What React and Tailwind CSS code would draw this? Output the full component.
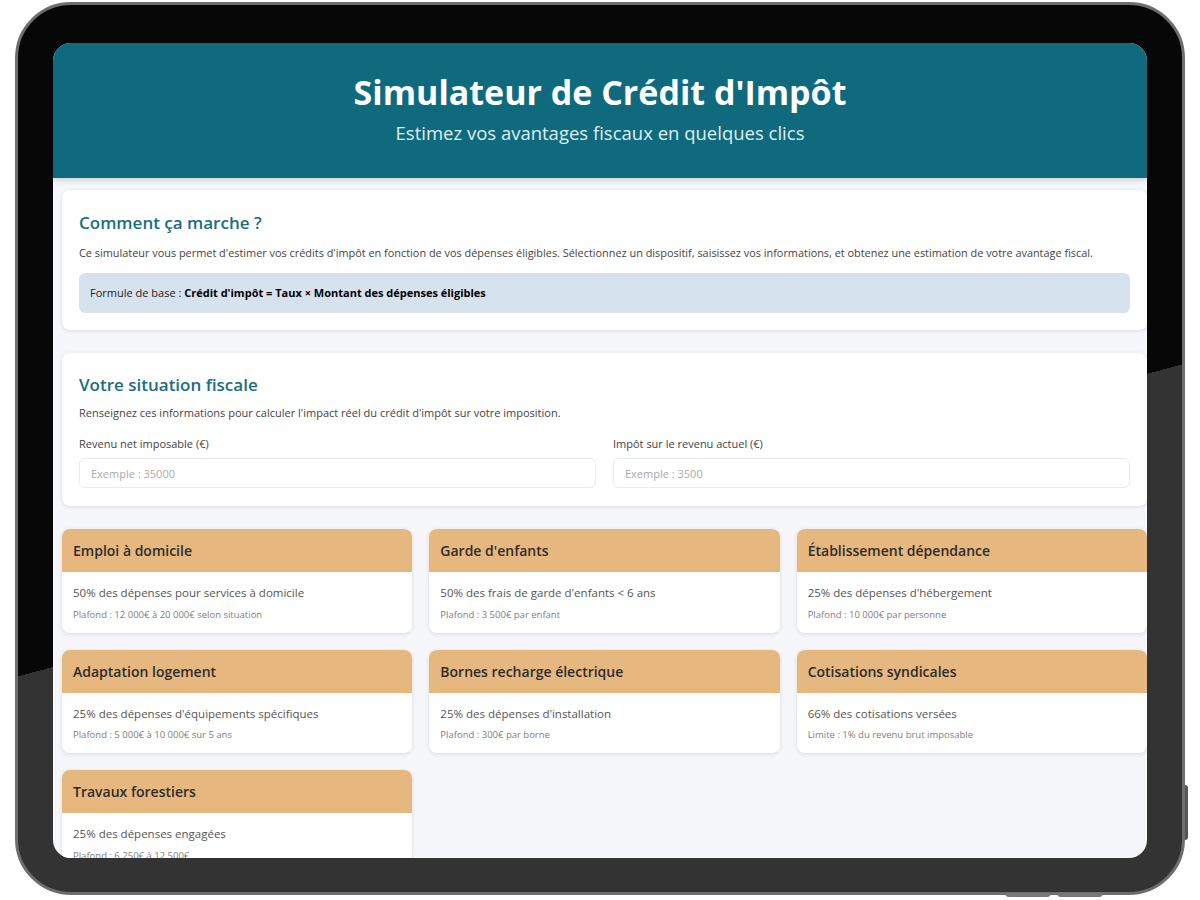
import React from 'react';

const credits = [
  { title: 'Emploi à domicile', rate: '50% des dépenses pour services à domicile', cap: 'Plafond : 12 000€ à 20 000€ selon situation' },
  { title: "Garde d'enfants", rate: "50% des frais de garde d'enfants < 6 ans", cap: 'Plafond : 3 500€ par enfant' },
  { title: 'Établissement dépendance', rate: "25% des dépenses d'hébergement", cap: 'Plafond : 10 000€ par personne' },
  { title: 'Adaptation logement', rate: "25% des dépenses d'équipements spécifiques", cap: 'Plafond : 5 000€ à 10 000€ sur 5 ans' },
  { title: 'Bornes recharge électrique', rate: "25% des dépenses d'installation", cap: 'Plafond : 300€ par borne' },
  { title: 'Cotisations syndicales', rate: '66% des cotisations versées', cap: 'Limite : 1% du revenu brut imposable' },
  { title: 'Travaux forestiers', rate: '25% des dépenses engagées', cap: 'Plafond : 6 250€ à 12 500€' },
];

const CreditCard = ({ item }) => (
  <div className="bg-white rounded-lg shadow-[0_1px_4px_rgba(0,0,0,0.12)] overflow-hidden">
    <div className="bg-[#e6b77f] h-[43px] flex items-center px-[11px]">
      <h3 className="text-[14px] font-semibold text-[#2d2d2d]">{item.title}</h3>
    </div>
    <div className="px-[11px] pt-[12px] pb-[11px]">
      <p className="text-[11.5px] text-[#555]">{item.rate}</p>
      <p className="text-[9.5px] text-[#808080] mt-[6px]">{item.cap}</p>
    </div>
  </div>
);

const App = () => {
  return (
    <div className="w-[1200px] h-[900px] bg-white relative font-['Open_Sans',sans-serif]">
      {/* tablet frame */}
      <div className="absolute left-[15px] top-[2px] w-[1170px] h-[893px] rounded-[56px] border-[3px] border-[#6e6e6e] bg-[linear-gradient(165deg,#070707_0%,#070707_56%,#333333_56%,#333333_100%)] p-[35px] pt-[38px] pb-[34px]">
        {/* screen */}
        <div className="w-full h-full rounded-[18px] overflow-hidden bg-[#f5f7fa]">
          <div className="bg-[#106a7e] h-[135px] flex flex-col items-center justify-center pb-[3px] shadow-[0_2px_6px_rgba(0,0,0,0.18)]">
            <h1 className="text-[34px] font-bold text-white leading-tight">Simulateur de Crédit d'Impôt</h1>
            <p className="text-[18.5px] text-[#dfeef2] mt-[6px]">Estimez vos avantages fiscaux en quelques clics</p>
          </div>

          <div className="pl-[9px] pr-0 pt-[12px] flex flex-col gap-[23px]">
            <div className="bg-white rounded-lg shadow-[0_1px_4px_rgba(0,0,0,0.12)] px-[17px] pt-[20px] pb-[17px]">
              <h2 className="text-[17px] font-semibold text-[#1a6e80]">Comment ça marche ?</h2>
              <p className="text-[10.9px] text-[#444] mt-[9px]">
                Ce simulateur vous permet d'estimer vos crédits d'impôt en fonction de vos dépenses éligibles. Sélectionnez un dispositif, saisissez vos informations, et obtenez une estimation de votre avantage fiscal.
              </p>
              <div className="bg-[#d7e2ef] rounded-md mt-[12px] h-[40px] flex items-center px-[11px] text-[11px] text-[#222]">
                <span>Formule de base :&nbsp;</span>
                <span className="font-bold text-black">Crédit d'impôt = Taux × Montant des dépenses éligibles</span>
              </div>
            </div>

            <div className="bg-white rounded-lg shadow-[0_1px_4px_rgba(0,0,0,0.12)] px-[17px] pt-[19px] pb-[18px]">
              <h2 className="text-[17px] font-semibold text-[#1a6e80]">Votre situation fiscale</h2>
              <p className="text-[11px] text-[#444] mt-[8px]">
                Renseignez ces informations pour calculer l'impact réel du crédit d'impôt sur votre imposition.
              </p>
              <div className="grid grid-cols-2 gap-[17px] mt-[14px]">
                <div>
                  <label className="block text-[11px] text-[#444]">Revenu net imposable (€)</label>
                  <input
                    type="text"
                    placeholder="Exemple : 35000"
                    className="mt-[6px] w-full h-[30px] border border-[#e8ebef] rounded-md px-[11px] text-[11px] placeholder:text-[#aaa] outline-none"
                  />
                </div>
                <div>
                  <label className="block text-[11px] text-[#444]">Impôt sur le revenu actuel (€)</label>
                  <input
                    type="text"
                    placeholder="Exemple : 3500"
                    className="mt-[6px] w-full h-[30px] border border-[#e8ebef] rounded-md px-[11px] text-[11px] placeholder:text-[#aaa] outline-none"
                  />
                </div>
              </div>
            </div>

            <div className="grid grid-cols-3 gap-[17px]">
              {credits.map((item) => (
                <CreditCard key={item.title} item={item} />
              ))}
            </div>
          </div>
        </div>
      </div>
      {/* side and bottom buttons */}
      <div className="absolute left-[1185px] top-[785px] w-[3px] h-[55px] rounded-r bg-[#555]" />
      <div className="absolute left-[1005px] top-[893px] w-[46px] h-[4px] rounded-b bg-[#777]" />
      <div className="absolute left-[1057px] top-[893px] w-[46px] h-[4px] rounded-b bg-[#777]" />
    </div>
  );
};

export default App;
